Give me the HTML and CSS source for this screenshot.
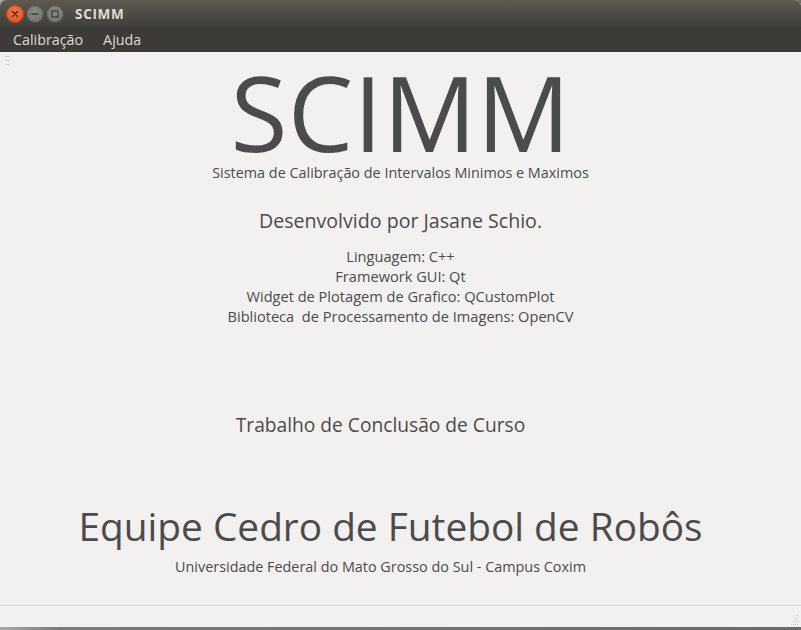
FILE: index.html
```html
<!DOCTYPE html>
<html lang="pt">
<head>
<meta charset="utf-8">
<title>SCIMM</title>
<link rel="stylesheet" href="styles.css">
</head>
<body>
<div class="window">
  <header class="titlebar">
    <div class="controls">
      <span class="btn close"><svg viewBox="0 0 10 10" width="10" height="10"><path d="M2.5 2.5L7.5 7.5M7.5 2.5L2.5 7.5" stroke="#3a1a10" stroke-width="1.3" stroke-linecap="round"/></svg></span>
      <span class="btn"><svg viewBox="0 0 10 10" width="10" height="10"><path d="M1.5 5H8.5" stroke="#3c3b37" stroke-width="1.4"/></svg></span>
      <span class="btn"><svg viewBox="0 0 10 10" width="10" height="10"><rect x="2" y="2" width="6" height="6" fill="none" stroke="#3c3b37" stroke-width="1.2"/></svg></span>
    </div>
    <span class="wintitle">SCIMM</span>
  </header>
  <nav class="menubar">
    <span class="menuitem">Calibração</span>
    <span class="menuitem">Ajuda</span>
  </nav>
  <main class="content">
    <div class="handle"><i></i><i></i><i></i></div>
    <h1 class="logo">SCIMM</h1>
    <p class="subtitle">Sistema de Calibração de Intervalos Minimos e Maximos</p>
    <p class="author">Desenvolvido por Jasane Schio.</p>
    <ul class="specs">
      <li>Linguagem: C++</li>
      <li>Framework GUI: Qt</li>
      <li>Widget de Plotagem de Grafico: QCustomPlot</li>
      <li>Biblioteca&nbsp; de Processamento de Imagens: OpenCV</li>
    </ul>
    <p class="tcc">Trabalho de Conclusão de Curso</p>
    <p class="team">Equipe Cedro de Futebol de Robôs</p>
    <p class="univ">Universidade Federal do Mato Grosso do Sul - Campus Coxim</p>
  </main>
  <footer class="statusbar">
    <svg class="grip" viewBox="0 0 10 10" width="10" height="10">
      <g fill="#c9c6c0">
        <rect x="8" y="0" width="1" height="1"/>
        <rect x="6" y="3" width="1" height="1"/><rect x="8" y="3" width="1" height="1"/>
        <rect x="4" y="6" width="1" height="1"/><rect x="6" y="6" width="1" height="1"/><rect x="8" y="6" width="1" height="1"/>
        <rect x="2" y="9" width="1" height="1"/><rect x="4" y="9" width="1" height="1"/><rect x="6" y="9" width="1" height="1"/><rect x="8" y="9" width="1" height="1"/>
      </g>
    </svg>
  </footer>
</div>
</body>
</html>
```

FILE: styles.css
```css
html, body {
  margin: 0;
  padding: 0;
}
body {
  width: 801px;
  height: 630px;
  overflow: hidden;
  background: linear-gradient(to right, #a9a9a9 0, #7a7a7a 60px, #6a6a6a 100%);
  font-family: "Open Sans", "DejaVu Sans", sans-serif;
}
.window {
  height: 627px;
  display: flex;
  flex-direction: column;
  background: #f2f1f0;
  border-radius: 6px 6px 0 0;
  overflow: hidden;
}
.titlebar {
  height: 27px;
  flex: none;
  display: flex;
  align-items: center;
  background: linear-gradient(to bottom, #5e5a4f 0, #4e4c45 50%, #3f3e39 100%);
  color: #dfdbd2;
}
.controls {
  display: flex;
  gap: 2px;
  padding-left: 6px;
}
.btn {
  width: 18px;
  height: 18px;
  border-radius: 50%;
  background: radial-gradient(circle at 50% 40%, #8a8983, #6d6c67);
  display: flex;
  align-items: center;
  justify-content: center;
  box-shadow: inset 0 0 0 1px #4a4944;
}
.btn.close {
  background: radial-gradient(circle at 50% 35%, #f3774b, #df4a16);
  box-shadow: inset 0 0 0 1px #a8401a;
}
.wintitle {
  margin-left: 11px;
  font-weight: 700;
  font-size: 13.5px;
  letter-spacing: 0.7px;
}
.menubar {
  height: 25px;
  flex: none;
  display: flex;
  align-items: center;
  gap: 20px;
  padding-left: 13px;
  background: #3c3b37;
  color: #dfdbd2;
  font-size: 14.3px;
}
.content {
  flex: 1;
  color: #4b4b4b;
  text-align: center;
  position: relative;
}
.handle {
  position: absolute;
  left: 5px;
  top: 4px;
  display: flex;
  flex-direction: column;
  gap: 2px;
}
.handle i {
  display: block;
  width: 5px;
  height: 1px;
  background: #cfccc7;
  border-bottom: 1px solid #fff;
}
p, h1, ul {
  margin: 0;
  padding: 0;
  font-weight: 400;
}
.logo {
  font-size: 104px;
  line-height: 92px;
  margin-top: 14px;
  letter-spacing: 0.3px;
}
.subtitle {
  font-size: 14.4px;
  line-height: 20px;
  margin-top: 5px;
}
.author {
  font-size: 19.6px;
  line-height: 26px;
  margin-top: 25px;
}
.specs {
  list-style: none;
  margin-top: 12px;
  font-size: 14.6px;
  line-height: 20px;
}
.tcc {
  font-size: 19.2px;
  line-height: 26px;
  margin-top: 86px;
  padding-right: 40px;
}
.team {
  font-size: 38.8px;
  line-height: 44px;
  margin-top: 66px;
  padding-right: 20px;
}
.univ {
  font-size: 14.4px;
  line-height: 20px;
  margin-top: 9px;
  padding-right: 40px;
}
.statusbar {
  box-sizing: border-box;
  height: 22px;
  flex: none;
  border-top: 1px solid #d3d1cc;
  box-shadow: inset 0 1px 0 #ffffff;
  display: flex;
  justify-content: flex-end;
  align-items: flex-end;
  padding: 0 2px 2px 0;
}
.grip {
  display: block;
}
```
